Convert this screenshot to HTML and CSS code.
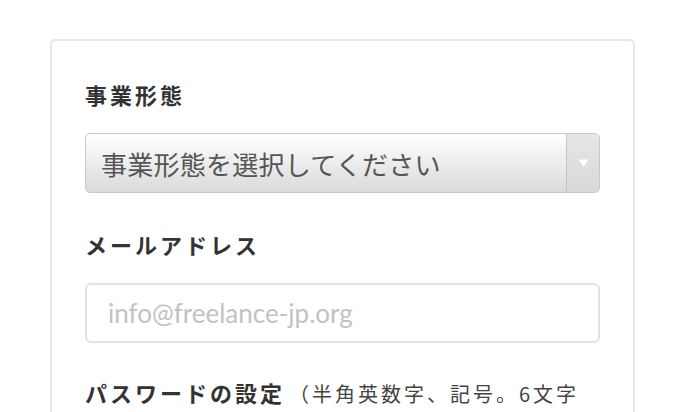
FILE: index.html
```html
<!DOCTYPE html>
<html lang="ja">
<head>
<meta charset="utf-8">
<link rel="stylesheet" href="styles.css">
</head>
<body>
<div class="card">
  <div class="field">
    <div class="label">事業形態</div>
    <div class="select">
      <span class="select-text">事業形態を選択してください</span>
      <span class="select-arrow"><svg width="11" height="9" viewBox="0 0 11 9"><path d="M0.5 0.5 H10.5 L5.5 8 Z" fill="#fff"/></svg></span>
    </div>
  </div>
  <div class="field field-email">
    <div class="label">メールアドレス</div>
    <input class="input" type="text" placeholder="info@freelance-jp.org">
  </div>
  <div class="field">
    <div class="label">パスワードの設定<span class="note">（半角英数字、記号。6文字<br>以上）</span></div>
  </div>
</div>
</body>
</html>
```
FILE: styles.css
```css
html, body {
  margin: 0;
  padding: 0;
  background: #fff;
}
body {
  font-family: "Noto Sans CJK JP", "Noto Sans", sans-serif;
  color: #333;
}
.card {
  margin: 39px 0 0 50px;
  width: 585px;
  box-sizing: border-box;
  border: 2px solid #e8e8e8;
  border-radius: 5px;
  padding: 38px 33px 0 33px;
  height: 420px;
}
.field {
  margin-bottom: 36px;
}
.field-email {
  margin-bottom: 34px;
}
.label {
  font-size: 22px;
  line-height: 30px;
  font-weight: 700;
  letter-spacing: 3px;
  color: #333;
  white-space: nowrap;
}
.note {
  margin-left: 4px;
  font-size: 20px;
  font-weight: 400;
  color: #444;
  letter-spacing: 3px;
}
.select {
  margin-top: 24px;
  display: flex;
  height: 60px;
  box-sizing: border-box;
  border: 1px solid #c9c9c9;
  border-radius: 5px;
  background: linear-gradient(#ffffff, #dadada);
  overflow: hidden;
}
.select-text {
  flex: 1;
  display: flex;
  align-items: center;
  padding-left: 15px;
  font-size: 26px;
  letter-spacing: 0.25px;
  color: #555;
  white-space: nowrap;
}
.select-arrow {
  width: 32px;
  border-left: 1px solid #c4c4c4;
  background: linear-gradient(#e6e6e6, #d8d8d8);
  display: flex;
  align-items: center;
  justify-content: center;
}
.input {
  display: block;
  margin-top: 24px;
  width: 100%;
  height: 60px;
  box-sizing: border-box;
  border: 2px solid #e2e2e2;
  border-radius: 6px;
  padding: 0 0 0 21px;
  font-family: "Lato", "Noto Sans", sans-serif;
  font-size: 26px;
  color: #333;
  outline: none;
}
.input::placeholder {
  color: #c2c2c2;
}
```
